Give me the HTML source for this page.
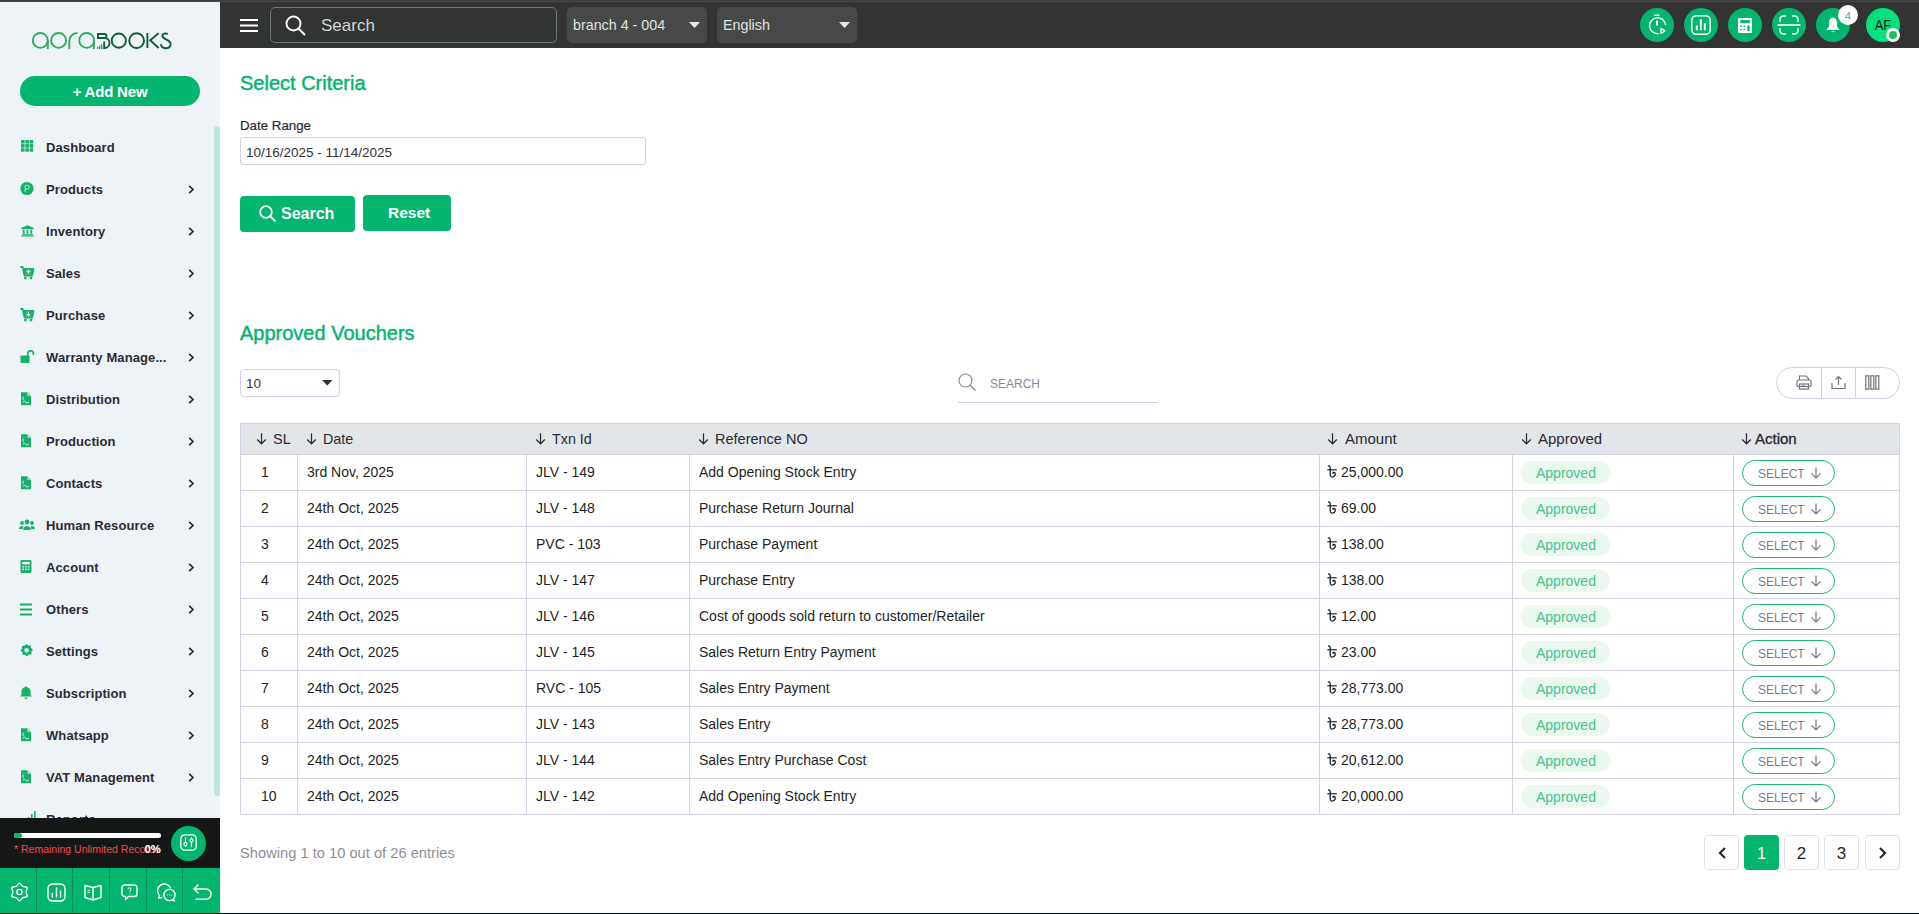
<!DOCTYPE html><html><head><meta charset="utf-8"><style>
*{margin:0;padding:0;box-sizing:border-box}
html,body{width:1919px;height:914px;overflow:hidden;background:#fff;font-family:"Liberation Sans",sans-serif}
.t{position:absolute;white-space:nowrap}
.r{position:absolute}
.s{position:absolute;overflow:visible}
</style></head><body>
<div class="r" style="left:0px;top:0px;width:220px;height:914px;background:#eef3f8;"></div>
<svg class="s" style="left:32px;top:32px;" width="140" height="18" viewBox="0 0 140 18"><g fill="none" stroke-width="1.9" stroke-linecap="butt">
<g stroke="#2bab5f">
<circle cx="8.3" cy="8.4" r="7.45"/><line x1="15.8" y1="8.5" x2="15.8" y2="17"/>
<circle cx="26.6" cy="8.4" r="7.45"/>
<path d="M37.3 17 V9 A7.9 7.9 0 0 1 45.6 1.1"/>
<circle cx="54.7" cy="8.4" r="7.45"/><line x1="61.9" y1="8.5" x2="61.9" y2="17"/>
</g>
<g stroke="#0e5f38">
<path d="M66 2 H72.5 A2 2 0 0 1 74.5 4 V4 A2 2 0 0 1 72.5 6 H66 Z"/>
<path d="M72.5 6 A5 5 0 0 1 72.5 16 H72.2 V9.5"/>
<circle cx="86.8" cy="8.6" r="7.1"/>
<circle cx="104.6" cy="8.6" r="7.4"/>
<line x1="115.4" y1="1" x2="115.4" y2="16"/><path d="M126.6 1.2 L118.2 8.3 L126.6 16"/>
<path d="M135.8 1.8 Q131 0.6 130.4 3.4 Q130 5.4 133.5 7.2 L135.5 8.2 Q139.2 10.2 138.6 13 Q137.8 16.2 133.8 16.2 Q129.8 16.2 128.8 12.2"/>
</g>
<g fill="#2bab5f" stroke="none"><rect x="65" y="14.8" width="1.4" height="2.2"/><rect x="67" y="13.6" width="1.4" height="3.4"/><rect x="69" y="12.2" width="1.4" height="4.8"/></g>
</g></svg>
<div class="r" style="left:20px;top:76px;width:180px;height:30px;border-radius:15px;background:#03b56f"></div>
<div class="t" style="left:110px;top:80.5px;font-size:15px;line-height:21px;color:#fff;font-weight:bold;transform:translateX(-50%);letter-spacing:-0.2px">+ Add New</div>
<div class="r" style="left:214px;top:126px;width:6px;height:670px;background:#bde7db;border-radius:3px"></div>
<svg class="s" style="left:20px;top:140px;" width="16" height="14" viewBox="0 0 16 14"><rect x="1.0" y="0.0" width="3.6" height="3.6" rx="0.5" fill="#17b26a"/><rect x="1.0" y="4.1" width="3.6" height="3.6" rx="0.5" fill="#17b26a"/><rect x="1.0" y="8.2" width="3.6" height="3.6" rx="0.5" fill="#17b26a"/><rect x="5.3" y="0.0" width="3.6" height="3.6" rx="0.5" fill="#17b26a"/><rect x="5.3" y="4.1" width="3.6" height="3.6" rx="0.5" fill="#17b26a"/><rect x="5.3" y="8.2" width="3.6" height="3.6" rx="0.5" fill="#17b26a"/><rect x="9.6" y="0.0" width="3.6" height="3.6" rx="0.5" fill="#17b26a"/><rect x="9.6" y="4.1" width="3.6" height="3.6" rx="0.5" fill="#17b26a"/><rect x="9.6" y="8.2" width="3.6" height="3.6" rx="0.5" fill="#17b26a"/></svg>
<div class="t" style="left:46px;top:139.0px;font-size:13px;line-height:18px;color:#2b2a35;font-weight:bold;letter-spacing:0.1px">Dashboard</div>
<svg class="s" style="left:20px;top:181.5px;" width="16" height="14" viewBox="0 0 16 14"><circle cx="7" cy="6.5" r="6.6" fill="#17b26a"/><path d="M5.2 10.2V3.4h2.2a1.9 1.9 0 0 1 0 3.8H5.2" stroke="#cdeedd" stroke-width="0.9" fill="none"/></svg>
<div class="t" style="left:46px;top:181.0px;font-size:13px;line-height:18px;color:#2b2a35;font-weight:bold;letter-spacing:0.1px">Products</div>
<svg class="s" style="left:188px;top:185px;" width="7" height="9" viewBox="0 0 7 9"><path d="M1.2 0.8 L5 4.5 L1.2 8.2" stroke="#2b2a35" stroke-width="1.7" fill="none"/></svg>
<svg class="s" style="left:20.5px;top:224.5px;" width="16" height="14" viewBox="0 0 16 14"><path d="M6.5 0.3 L12.8 3 V3.9 H0.2 V3Z M1 9.3 H12 V10.3 H1Z M0.2 10.6 H12.8 V11.6 H0.2Z" fill="#17b26a"/><rect x="1.8" y="4.5" width="1.8" height="4.3" fill="#17b26a"/><rect x="5.6" y="4.5" width="1.8" height="4.3" fill="#17b26a"/><rect x="9.4" y="4.5" width="1.8" height="4.3" fill="#17b26a"/></svg>
<div class="t" style="left:46px;top:223.0px;font-size:13px;line-height:18px;color:#2b2a35;font-weight:bold;letter-spacing:0.1px">Inventory</div>
<svg class="s" style="left:188px;top:227px;" width="7" height="9" viewBox="0 0 7 9"><path d="M1.2 0.8 L5 4.5 L1.2 8.2" stroke="#2b2a35" stroke-width="1.7" fill="none"/></svg>
<svg class="s" style="left:20px;top:266px;" width="16" height="14" viewBox="0 0 16 14"><path d="M0.3 1 H2.6 L4.7 9.5 H12 L13.6 3 H4" stroke="#17b26a" stroke-width="1.8" fill="none" stroke-linejoin="round"/><rect x="3.6" y="3" width="9.6" height="5.6" fill="#17b26a"/><circle cx="5.3" cy="12.1" r="1.4" fill="#17b26a"/><circle cx="11" cy="12.1" r="1.4" fill="#17b26a"/><path d="M8.4 3.6V7.8M6.3 5.7H10.5" stroke="#fff" stroke-width="1.2"/></svg>
<div class="t" style="left:46px;top:265.0px;font-size:13px;line-height:18px;color:#2b2a35;font-weight:bold;letter-spacing:0.1px">Sales</div>
<svg class="s" style="left:188px;top:269px;" width="7" height="9" viewBox="0 0 7 9"><path d="M1.2 0.8 L5 4.5 L1.2 8.2" stroke="#2b2a35" stroke-width="1.7" fill="none"/></svg>
<svg class="s" style="left:20px;top:308px;" width="16" height="14" viewBox="0 0 16 14"><path d="M0.3 1 H2.6 L4.7 9.5 H12 L13.6 3 H4" stroke="#17b26a" stroke-width="1.8" fill="none" stroke-linejoin="round"/><rect x="3.6" y="3" width="9.6" height="5.6" fill="#17b26a"/><circle cx="5.3" cy="12.1" r="1.4" fill="#17b26a"/><circle cx="11" cy="12.1" r="1.4" fill="#17b26a"/><path d="M8.4 3.4V7.6M6.6 5.9L8.4 7.7L10.2 5.9" stroke="#fff" stroke-width="1.1" fill="none"/></svg>
<div class="t" style="left:46px;top:307.0px;font-size:13px;line-height:18px;color:#2b2a35;font-weight:bold;letter-spacing:0.1px">Purchase</div>
<svg class="s" style="left:188px;top:311px;" width="7" height="9" viewBox="0 0 7 9"><path d="M1.2 0.8 L5 4.5 L1.2 8.2" stroke="#2b2a35" stroke-width="1.7" fill="none"/></svg>
<svg class="s" style="left:20px;top:350px;" width="16" height="14" viewBox="0 0 16 14"><rect x="0.5" y="5.5" width="9" height="7.5" rx="0.8" fill="#17b26a"/><path d="M7.8 5.8V3.6a2.8 2.8 0 0 1 5.6 0V5" stroke="#17b26a" stroke-width="1.7" fill="none"/></svg>
<div class="t" style="left:46px;top:349.0px;font-size:13px;line-height:18px;color:#2b2a35;font-weight:bold;letter-spacing:0.1px">Warranty Manage...</div>
<svg class="s" style="left:188px;top:353px;" width="7" height="9" viewBox="0 0 7 9"><path d="M1.2 0.8 L5 4.5 L1.2 8.2" stroke="#2b2a35" stroke-width="1.7" fill="none"/></svg>
<svg class="s" style="left:20px;top:392px;" width="16" height="14" viewBox="0 0 16 14"><path d="M1 0.3 H7.3 L11 4 V13.3 H1Z" fill="#17b26a"/><path d="M7.3 0.3V4H11" fill="#9ad9b8"/><path d="M3 10.5 Q4.5 7.5 5.5 10 T9 10" stroke="#fff" stroke-width="0.8" fill="none"/><path d="M3 4.5 V8" stroke="#fff" stroke-width="0.8"/></svg>
<div class="t" style="left:46px;top:391.0px;font-size:13px;line-height:18px;color:#2b2a35;font-weight:bold;letter-spacing:0.1px">Distribution</div>
<svg class="s" style="left:188px;top:395px;" width="7" height="9" viewBox="0 0 7 9"><path d="M1.2 0.8 L5 4.5 L1.2 8.2" stroke="#2b2a35" stroke-width="1.7" fill="none"/></svg>
<svg class="s" style="left:20px;top:434px;" width="16" height="14" viewBox="0 0 16 14"><path d="M1 0.3 H7.3 L11 4 V13.3 H1Z" fill="#17b26a"/><path d="M7.3 0.3V4H11" fill="#9ad9b8"/><path d="M3 10.5 Q4.5 7.5 5.5 10 T9 10" stroke="#fff" stroke-width="0.8" fill="none"/><path d="M3 4.5 V8" stroke="#fff" stroke-width="0.8"/></svg>
<div class="t" style="left:46px;top:433.0px;font-size:13px;line-height:18px;color:#2b2a35;font-weight:bold;letter-spacing:0.1px">Production</div>
<svg class="s" style="left:188px;top:437px;" width="7" height="9" viewBox="0 0 7 9"><path d="M1.2 0.8 L5 4.5 L1.2 8.2" stroke="#2b2a35" stroke-width="1.7" fill="none"/></svg>
<svg class="s" style="left:20px;top:476px;" width="16" height="14" viewBox="0 0 16 14"><path d="M1 0.3 H7.3 L11 4 V13.3 H1Z" fill="#17b26a"/><path d="M7.3 0.3V4H11" fill="#9ad9b8"/><path d="M3 10.5 Q4.5 7.5 5.5 10 T9 10" stroke="#fff" stroke-width="0.8" fill="none"/><path d="M3 4.5 V8" stroke="#fff" stroke-width="0.8"/></svg>
<div class="t" style="left:46px;top:475.0px;font-size:13px;line-height:18px;color:#2b2a35;font-weight:bold;letter-spacing:0.1px">Contacts</div>
<svg class="s" style="left:188px;top:479px;" width="7" height="9" viewBox="0 0 7 9"><path d="M1.2 0.8 L5 4.5 L1.2 8.2" stroke="#2b2a35" stroke-width="1.7" fill="none"/></svg>
<svg class="s" style="left:19px;top:519px;" width="16" height="14" viewBox="0 0 16 14"><circle cx="8" cy="3" r="2.4" fill="#17b26a"/><circle cx="3" cy="4" r="1.9" fill="#17b26a"/><circle cx="13" cy="4" r="1.9" fill="#17b26a"/><path d="M4.3 11 a3.7 3.7 0 0 1 7.4 0Z" fill="#17b26a"/><path d="M0 10 a3 2.6 0 0 1 4.5 -2.6 L3.8 10Z M16 10 a3 2.6 0 0 0 -4.5 -2.6 L12.2 10Z" fill="#17b26a"/></svg>
<div class="t" style="left:46px;top:517.0px;font-size:13px;line-height:18px;color:#2b2a35;font-weight:bold;letter-spacing:0.1px">Human Resource</div>
<svg class="s" style="left:188px;top:521px;" width="7" height="9" viewBox="0 0 7 9"><path d="M1.2 0.8 L5 4.5 L1.2 8.2" stroke="#2b2a35" stroke-width="1.7" fill="none"/></svg>
<svg class="s" style="left:20px;top:560px;" width="16" height="14" viewBox="0 0 16 14"><rect x="0.5" y="0" width="11" height="13" rx="1.2" fill="#17b26a"/><rect x="2.3" y="1.8" width="7.4" height="2.6" fill="#eef3f8"/><rect x="2.3" y="6.0" width="1.6" height="1.5" fill="#eef3f8"/><rect x="2.3" y="8.6" width="1.6" height="1.5" fill="#eef3f8"/><rect x="5.0" y="6.0" width="1.6" height="1.5" fill="#eef3f8"/><rect x="5.0" y="8.6" width="1.6" height="1.5" fill="#eef3f8"/><rect x="7.7" y="6.0" width="1.6" height="1.5" fill="#eef3f8"/><rect x="7.7" y="8.6" width="1.6" height="1.5" fill="#eef3f8"/></svg>
<div class="t" style="left:46px;top:559.0px;font-size:13px;line-height:18px;color:#2b2a35;font-weight:bold;letter-spacing:0.1px">Account</div>
<svg class="s" style="left:188px;top:563px;" width="7" height="9" viewBox="0 0 7 9"><path d="M1.2 0.8 L5 4.5 L1.2 8.2" stroke="#2b2a35" stroke-width="1.7" fill="none"/></svg>
<svg class="s" style="left:20px;top:603px;" width="16" height="14" viewBox="0 0 16 14"><path d="M0 1.5H12M0 6.5H12M0 11.5H12" stroke="#17b26a" stroke-width="1.9"/></svg>
<div class="t" style="left:46px;top:601.0px;font-size:13px;line-height:18px;color:#2b2a35;font-weight:bold;letter-spacing:0.1px">Others</div>
<svg class="s" style="left:188px;top:605px;" width="7" height="9" viewBox="0 0 7 9"><path d="M1.2 0.8 L5 4.5 L1.2 8.2" stroke="#2b2a35" stroke-width="1.7" fill="none"/></svg>
<svg class="s" style="left:20px;top:644px;" width="16" height="14" viewBox="0 0 16 14"><path d="M6.5 0 L8.2 1.6 L10.8 1.4 L11 4 L13 5.7 L11.4 7.6 L11.5 10.3 L8.9 10.5 L7 12.6 L5.1 10.8 L2.5 10.8 L2.4 8.2 L0.3 6.6 L2 4.6 L1.9 2 L4.5 1.8Z" fill="#17b26a"/><circle cx="6.6" cy="6.3" r="2.2" fill="#eef3f8"/></svg>
<div class="t" style="left:46px;top:643.0px;font-size:13px;line-height:18px;color:#2b2a35;font-weight:bold;letter-spacing:0.1px">Settings</div>
<svg class="s" style="left:188px;top:647px;" width="7" height="9" viewBox="0 0 7 9"><path d="M1.2 0.8 L5 4.5 L1.2 8.2" stroke="#2b2a35" stroke-width="1.7" fill="none"/></svg>
<svg class="s" style="left:20px;top:686px;" width="16" height="14" viewBox="0 0 16 14"><path d="M6 0.3 a1 1 0 0 1 1 1 a4.3 4.3 0 0 1 3.6 4.3 V9 L12 10.6 H0 L1.4 9 V5.6 A4.3 4.3 0 0 1 5 1.3 a1 1 0 0 1 1 -1Z" fill="#17b26a"/><path d="M4.5 11.4 a1.5 1.5 0 0 0 3 0Z" fill="#17b26a"/></svg>
<div class="t" style="left:46px;top:685.0px;font-size:13px;line-height:18px;color:#2b2a35;font-weight:bold;letter-spacing:0.1px">Subscription</div>
<svg class="s" style="left:188px;top:689px;" width="7" height="9" viewBox="0 0 7 9"><path d="M1.2 0.8 L5 4.5 L1.2 8.2" stroke="#2b2a35" stroke-width="1.7" fill="none"/></svg>
<svg class="s" style="left:20px;top:728px;" width="16" height="14" viewBox="0 0 16 14"><path d="M1 0.3 H7.3 L11 4 V13.3 H1Z" fill="#17b26a"/><path d="M7.3 0.3V4H11" fill="#9ad9b8"/><path d="M3 10.5 Q4.5 7.5 5.5 10 T9 10" stroke="#fff" stroke-width="0.8" fill="none"/><path d="M3 4.5 V8" stroke="#fff" stroke-width="0.8"/></svg>
<div class="t" style="left:46px;top:727.0px;font-size:13px;line-height:18px;color:#2b2a35;font-weight:bold;letter-spacing:0.1px">Whatsapp</div>
<svg class="s" style="left:188px;top:731px;" width="7" height="9" viewBox="0 0 7 9"><path d="M1.2 0.8 L5 4.5 L1.2 8.2" stroke="#2b2a35" stroke-width="1.7" fill="none"/></svg>
<svg class="s" style="left:20px;top:770px;" width="16" height="14" viewBox="0 0 16 14"><path d="M1 0.3 H7.3 L11 4 V13.3 H1Z" fill="#17b26a"/><path d="M7.3 0.3V4H11" fill="#9ad9b8"/><path d="M3 10.5 Q4.5 7.5 5.5 10 T9 10" stroke="#fff" stroke-width="0.8" fill="none"/><path d="M3 4.5 V8" stroke="#fff" stroke-width="0.8"/></svg>
<div class="t" style="left:46px;top:769.0px;font-size:13px;line-height:18px;color:#2b2a35;font-weight:bold;letter-spacing:0.1px">VAT Management</div>
<svg class="s" style="left:188px;top:773px;" width="7" height="9" viewBox="0 0 7 9"><path d="M1.2 0.8 L5 4.5 L1.2 8.2" stroke="#2b2a35" stroke-width="1.7" fill="none"/></svg>
<svg class="s" style="left:27.5px;top:811px;" width="16" height="14" viewBox="0 0 16 14"><rect x="0" y="6" width="1.6" height="5" fill="#17b26a"/><rect x="3" y="3" width="1.6" height="8" fill="#17b26a"/><rect x="6" y="0" width="1.6" height="11" fill="#17b26a"/></svg>
<div class="t" style="left:46px;top:811.0px;font-size:13px;line-height:18px;color:#2b2a35;font-weight:bold;letter-spacing:0.1px">Reports</div>
<div class="r" style="left:0px;top:818px;width:220px;height:50px;background:#151716;"></div>
<div class="r" style="left:14px;top:833px;width:147px;height:5px;background:#fff;border-radius:3px"></div>
<div class="r" style="left:14px;top:833px;width:8px;height:5px;background:#03b56f;border-radius:3px"></div>
<div class="t" style="left:14px;top:842.0px;font-size:10.5px;line-height:14px;color:#ef4d4d;font-weight:normal;">* Remaining Unlimited Records</div>
<div class="t" style="left:144.5px;top:841.5px;font-size:11.3px;line-height:14px;color:#fff;font-weight:bold;">0%</div>
<div class="r" style="left:171px;top:826px;width:35px;height:35px;border-radius:50%;background:#03b56f"></div>
<svg class="s" style="left:180px;top:834px;" width="17" height="17" viewBox="0 0 17 17"><rect x="0.8" y="0.8" width="15.4" height="15.4" rx="4" stroke="#fff" stroke-width="1.3" fill="none"/><path d="M5.5 3.5V13M11.5 3.5V13" stroke="#fff" stroke-width="1.2"/><circle cx="5.5" cy="10" r="1.6" fill="#03b56f" stroke="#fff" stroke-width="1.1"/><circle cx="11.5" cy="6.5" r="1.6" fill="#03b56f" stroke="#fff" stroke-width="1.1"/></svg>
<div class="r" style="left:0px;top:868px;width:220px;height:45px;background:#03b56f;"></div>
<div class="r" style="left:36px;top:868px;width:1px;height:45px;background:#0b8a57;"></div>
<div class="r" style="left:72px;top:868px;width:1px;height:45px;background:#0b8a57;"></div>
<div class="r" style="left:109px;top:868px;width:1px;height:45px;background:#0b8a57;"></div>
<div class="r" style="left:146px;top:868px;width:1px;height:45px;background:#0b8a57;"></div>
<div class="r" style="left:182px;top:868px;width:1px;height:45px;background:#0b8a57;"></div>
<svg class="s" style="left:10px;top:882px;" width="19" height="20" viewBox="0 0 19 20"><path d="M9.50 1.10 C10.60 1.10 11.52 3.54 12.80 4.28 C14.08 5.03 16.66 4.60 17.21 5.55 C17.76 6.50 16.10 8.52 16.10 10.00 C16.10 11.48 17.76 13.50 17.21 14.45 C16.66 15.40 14.08 14.97 12.80 15.72 C11.52 16.46 10.60 18.90 9.50 18.90 C8.40 18.90 7.48 16.46 6.20 15.72 C4.92 14.97 2.34 15.40 1.79 14.45 C1.24 13.50 2.90 11.48 2.90 10.00 C2.90 8.52 1.24 6.50 1.79 5.55 C2.34 4.60 4.92 5.03 6.20 4.28 C7.48 3.54 8.40 1.10 9.50 1.10Z" stroke="#fff" stroke-width="1.4" fill="none" stroke-linecap="round" stroke-linejoin="round"/><circle cx="9.5" cy="10" r="2.6" stroke="#fff" stroke-width="1.4" fill="none" stroke-linecap="round" stroke-linejoin="round"/></svg>
<svg class="s" style="left:47px;top:883px;" width="19" height="19" viewBox="0 0 19 19"><rect x="1" y="1" width="17" height="17" rx="4.5" stroke="#fff" stroke-width="1.4" fill="none" stroke-linecap="round" stroke-linejoin="round"/><path d="M5.3 14V10.5M9.5 14V5M13.5 14V8" stroke="#fff" stroke-width="1.4" fill="none" stroke-linecap="round" stroke-linejoin="round"/></svg>
<svg class="s" style="left:84px;top:884px;" width="18" height="17" viewBox="0 0 18 17"><path d="M9 3.5 L1 1.5 V13.5 L9 16 L17 13.5 V1.5Z M9 3.5V16" stroke="#fff" stroke-width="1.4" fill="none" stroke-linecap="round" stroke-linejoin="round"/><path d="M3.5 6.3H5.8M3.5 8.3H5.8" stroke="#fff" stroke-width="0.9"/></svg>
<svg class="s" style="left:121px;top:884px;" width="17" height="17" viewBox="0 0 17 17"><path d="M3.5 1 H13.5 A2.5 2.5 0 0 1 16 3.5 V10 A2.5 2.5 0 0 1 13.5 12.5 H7.5 L4.5 15.5 V12.5 H3.5 A2.5 2.5 0 0 1 1 10 V3.5 A2.5 2.5 0 0 1 3.5 1Z" stroke="#fff" stroke-width="1.4" fill="none" stroke-linecap="round" stroke-linejoin="round"/><path d="M7 5.2 a1.5 1.5 0 1 1 2 1.4 V8" stroke="#fff" stroke-width="1" fill="none"/><circle cx="9" cy="9.8" r="0.5" fill="#fff"/></svg>
<svg class="s" style="left:157px;top:883px;" width="20" height="19" viewBox="0 0 20 19"><path d="M13.5 4.8 A6.8 6.8 0 1 0 2.5 12.5 L1.5 15 L4.8 14.5" stroke="#fff" stroke-width="1.4" fill="none" stroke-linecap="round" stroke-linejoin="round"/><circle cx="12.5" cy="12" r="5.6" stroke="#fff" stroke-width="1.4" fill="none" stroke-linecap="round" stroke-linejoin="round"/><path d="M15.5 17 L17.5 18" stroke="#fff" stroke-width="1.4" fill="none" stroke-linecap="round" stroke-linejoin="round"/><circle cx="10.3" cy="12" r="0.6" fill="#fff"/><circle cx="12.5" cy="12" r="0.6" fill="#fff"/><circle cx="14.7" cy="12" r="0.6" fill="#fff"/></svg>
<svg class="s" style="left:193px;top:884px;" width="19" height="18" viewBox="0 0 19 18"><path d="M5 1 L1 5 L5 9 M1 5 H13 A4.8 4.8 0 0 1 13 15.2 H3" stroke="#fff" stroke-width="1.4" fill="none" stroke-linecap="round" stroke-linejoin="round"/></svg>
<div class="r" style="left:0px;top:0px;width:1919px;height:1px;background:#3c3c3c;"></div>
<div class="r" style="left:0px;top:1px;width:1919px;height:1px;background:#484948;"></div>
<div class="r" style="left:0px;top:913px;width:1919px;height:1px;background:#02141a;"></div>
<div class="r" style="left:220px;top:2px;width:1699px;height:46px;background:#313433;"></div>
<svg class="s" style="left:240px;top:18px;" width="18" height="15" viewBox="0 0 18 15"><path d="M0 2H18M0 7.5H18M0 13H18" stroke="#fff" stroke-width="2.2"/></svg>
<div class="r" style="left:270px;top:7px;width:287px;height:36px;border:1px solid #6d7773;border-radius:5px"></div>
<svg class="s" style="left:285px;top:15px;" width="21" height="21" viewBox="0 0 21 21"><circle cx="8.5" cy="8.5" r="7" stroke="#fff" stroke-width="1.9" fill="none"/><path d="M13.5 13.5L19.5 19.5" stroke="#fff" stroke-width="1.9" stroke-linecap="round"/></svg>
<div class="t" style="left:321px;top:13.5px;font-size:17px;line-height:23px;color:#d2d5d4;font-weight:normal;">Search</div>
<div class="r" style="left:567px;top:7px;width:140px;height:36px;background:#464948;border-radius:5px"></div>
<div class="t" style="left:573px;top:15.0px;font-size:14.3px;line-height:20px;color:#e0e2e1;font-weight:normal;">branch 4 - 004</div>
<svg class="s" style="left:689px;top:22px;" width="12" height="7" viewBox="0 0 12 7"><path d="M0 0H11L5.5 6Z" fill="#e6e7e7"/></svg>
<div class="r" style="left:717px;top:7px;width:140px;height:36px;background:#464948;border-radius:5px"></div>
<div class="t" style="left:723px;top:15.0px;font-size:14.3px;line-height:20px;color:#e0e2e1;font-weight:normal;">English</div>
<svg class="s" style="left:839px;top:22px;" width="12" height="7" viewBox="0 0 12 7"><path d="M0 0H11L5.5 6Z" fill="#e6e7e7"/></svg>
<div class="r" style="left:1640px;top:8px;width:34px;height:34px;border-radius:50%;background:#03b56f"></div>
<div class="r" style="left:1684px;top:8px;width:34px;height:34px;border-radius:50%;background:#03b56f"></div>
<div class="r" style="left:1728px;top:8px;width:34px;height:34px;border-radius:50%;background:#03b56f"></div>
<div class="r" style="left:1772px;top:8px;width:34px;height:34px;border-radius:50%;background:#03b56f"></div>
<div class="r" style="left:1816px;top:8px;width:34px;height:34px;border-radius:50%;background:#03b56f"></div>
<svg class="s" style="left:1647px;top:14px;" width="22" height="22" viewBox="0 0 22 22"><path d="M7.5 1.3H12" stroke="#fff" stroke-width="1.4" fill="none" stroke-linecap="round" stroke-linejoin="round"/><path d="M10 6.5 V11.5" stroke="#fff" stroke-width="1.9"/><path d="M18.5 10.5 A8 8 0 1 0 11 19.8" stroke="#fff" stroke-width="1.4" fill="none" stroke-linecap="round" stroke-linejoin="round"/><path d="M14 14.3 L18 16.8 L14 19.3Z" stroke="#fff" stroke-width="1.4" fill="none" stroke-linecap="round" stroke-linejoin="round"/></svg>
<svg class="s" style="left:1691px;top:15px;" width="20" height="20" viewBox="0 0 20 20"><rect x="0.8" y="0.8" width="18.4" height="18.4" rx="4.5" stroke="#fff" stroke-width="1.4" fill="none" stroke-linecap="round" stroke-linejoin="round"/><path d="M5.8 15.3V10.5M9.8 15.3V4.3M13.8 15.3V8.3" stroke="#fff" stroke-width="1.9"/></svg>
<svg class="s" style="left:1738px;top:18px;" width="14" height="15" viewBox="0 0 14 15"><rect x="0" y="0" width="14" height="15" rx="0.8" fill="#fff"/><rect x="2.3" y="2" width="9.5" height="3.2" fill="#03b56f"/><rect x="2.2" y="7.5" width="1.4" height="1.4" fill="#03b56f"/><rect x="2.2" y="10.8" width="1.4" height="1.4" fill="#03b56f"/><rect x="5.5" y="7.5" width="1.4" height="1.4" fill="#03b56f"/><rect x="5.5" y="10.8" width="1.4" height="1.4" fill="#03b56f"/><rect x="9.3" y="7.5" width="2.4" height="5.7" fill="#03b56f"/></svg>
<svg class="s" style="left:1777px;top:15px;" width="24" height="20" viewBox="0 0 24 20"><path d="M3 6.5V4.5A3.5 3.5 0 0 1 6.5 1H8.5M15.5 1H17.5A3.5 3.5 0 0 1 21 4.5V6.5M21 13.5V15.5A3.5 3.5 0 0 1 17.5 19H15.5M8.5 19H6.5A3.5 3.5 0 0 1 3 15.5V13.5" stroke="#fff" stroke-width="1.4" fill="none" stroke-linecap="round" stroke-linejoin="round"/><path d="M0.5 10H23.5" stroke="#fff" stroke-width="1.6"/></svg>
<svg class="s" style="left:1826px;top:17px;" width="14" height="17" viewBox="0 0 14 17"><path d="M7 0.8 C4 0.8 3 3.5 3 6 V9.5 L0.3 13 H13.7 L11 9.5 V6 C11 3.5 10 0.8 7 0.8Z" fill="#fff"/><path d="M5.3 14.3 A1.8 1.6 0 0 0 8.7 14.3Z" fill="#fff"/></svg>
<div class="r" style="left:1838px;top:5px;width:20px;height:20px;border-radius:50%;background:#fff"></div>
<div class="t" style="left:1848px;top:8.6px;font-size:10.5px;line-height:14px;color:#3aa2c2;font-weight:normal;transform:translateX(-50%)">4</div>
<div class="r" style="left:1866px;top:8px;width:34px;height:34px;border-radius:50%;background:#00e27a"></div>
<div class="t" style="left:1883px;top:14.1px;font-size:15px;line-height:21px;color:#111;font-weight:normal;transform:translateX(-50%) scaleX(0.86)">AF</div>
<div class="r" style="left:1886px;top:28px;width:14px;height:14px;border-radius:50%;background:#1ec25c;border:3px solid #fff"></div>
<div class="t" style="left:240px;top:70.0px;font-size:20px;line-height:26px;color:#03b56f;font-weight:normal;-webkit-text-stroke:0.45px #03b56f">Select Criteria</div>
<div class="t" style="left:240px;top:117.0px;font-size:13.3px;line-height:18px;color:#2b2a35;font-weight:normal;-webkit-text-stroke:0.2px #2b2a35">Date Range</div>
<div class="r" style="left:240px;top:137px;width:406px;height:28px;border:1px solid #d3d1e3;border-radius:3px"></div>
<div class="t" style="left:246px;top:143.5px;font-size:13.5px;line-height:18px;color:#333;font-weight:normal;">10/16/2025 - 11/14/2025</div>
<div class="r" style="left:240px;top:196px;width:115px;height:36px;border-radius:4px;background:#03b56f"></div>
<svg class="s" style="left:259px;top:205px;" width="17" height="17" viewBox="0 0 17 17"><circle cx="7" cy="7" r="5.8" stroke="#fff" stroke-width="1.8" fill="none"/><path d="M11.2 11.2L16 16" stroke="#fff" stroke-width="1.8" stroke-linecap="round"/></svg>
<div class="t" style="left:281px;top:204.0px;font-size:16px;line-height:20px;color:#fff;font-weight:bold;">Search</div>
<div class="r" style="left:363px;top:195px;width:88px;height:36px;border-radius:4px;background:#03b56f"></div>
<div class="t" style="left:388px;top:203.0px;font-size:15.5px;line-height:20px;color:#fff;font-weight:bold;">Reset</div>
<div class="t" style="left:240px;top:320.0px;font-size:20px;line-height:26px;color:#03b56f;font-weight:normal;-webkit-text-stroke:0.45px #03b56f">Approved Vouchers</div>
<div class="r" style="left:240px;top:369px;width:100px;height:28px;border:1px solid #d3d1e3;border-radius:4px"></div>
<div class="t" style="left:246px;top:374.5px;font-size:13.5px;line-height:18px;color:#333;font-weight:normal;">10</div>
<svg class="s" style="left:322px;top:380px;" width="11" height="6" viewBox="0 0 11 6"><path d="M0 0H10.5L5.25 5.5Z" fill="#2f3534"/></svg>
<svg class="s" style="left:958px;top:373px;" width="19" height="19" viewBox="0 0 19 19"><circle cx="7.5" cy="7.5" r="6.5" stroke="#8b8e98" stroke-width="1.2" fill="none"/><path d="M12.2 12.2L17.5 17.5" stroke="#8b8e98" stroke-width="1.3"/></svg>
<div class="t" style="left:990px;top:375.5px;font-size:12px;line-height:16px;color:#878b96;font-weight:normal;">SEARCH</div>
<div class="r" style="left:958px;top:402px;width:200px;height:1px;background:#d3d1e3;"></div>
<div class="r" style="left:1776px;top:367px;width:124px;height:32px;border:1px solid #d3d1e3;border-radius:16px"></div>
<div class="r" style="left:1821px;top:368px;width:1px;height:30px;background:#d3d1e3;"></div>
<div class="r" style="left:1855px;top:368px;width:1px;height:30px;background:#d3d1e3;"></div>
<svg class="s" style="left:1796px;top:375px;" width="16" height="15" viewBox="0 0 16 15"><path d="M3.5 5V1H10L12.5 3.5V5" stroke="#6f7480" stroke-width="1.2" fill="none"/><rect x="1" y="5" width="14" height="6.5" rx="1.5" stroke="#6f7480" stroke-width="1.2" fill="none"/><rect x="3.5" y="9" width="9" height="5" stroke="#6f7480" stroke-width="1.2" fill="none"/><path d="M5.5 11H9" stroke="#6f7480" stroke-width="1.2" fill="none"/></svg>
<svg class="s" style="left:1831px;top:375px;" width="15" height="15" viewBox="0 0 15 15"><path d="M7.5 10V1.5M4.5 4.5L7.5 1.5L10.5 4.5M1 8V13.5H14V8" stroke="#6f7480" stroke-width="1.2" fill="none"/></svg>
<svg class="s" style="left:1865px;top:375px;" width="15" height="15" viewBox="0 0 15 15"><rect x="0.8" y="0.8" width="3" height="13.4" stroke="#6f7480" stroke-width="1.2" fill="none"/><rect x="5.8" y="0.8" width="3" height="13.4" stroke="#6f7480" stroke-width="1.2" fill="none"/><rect x="10.8" y="0.8" width="3" height="13.4" stroke="#6f7480" stroke-width="1.2" fill="none"/></svg>
<div class="r" style="left:240px;top:423px;width:1660px;height:32px;background:#e2e6e9;"></div>
<div class="r" style="left:240px;top:423px;width:1660px;height:1px;background:#d3d1e3;"></div>
<div class="r" style="left:240px;top:454px;width:1660px;height:1px;background:#d3d1e3;"></div>
<div class="r" style="left:240px;top:490px;width:1660px;height:1px;background:#d3d1e3;"></div>
<div class="r" style="left:240px;top:526px;width:1660px;height:1px;background:#d3d1e3;"></div>
<div class="r" style="left:240px;top:562px;width:1660px;height:1px;background:#d3d1e3;"></div>
<div class="r" style="left:240px;top:598px;width:1660px;height:1px;background:#d3d1e3;"></div>
<div class="r" style="left:240px;top:634px;width:1660px;height:1px;background:#d3d1e3;"></div>
<div class="r" style="left:240px;top:670px;width:1660px;height:1px;background:#d3d1e3;"></div>
<div class="r" style="left:240px;top:706px;width:1660px;height:1px;background:#d3d1e3;"></div>
<div class="r" style="left:240px;top:742px;width:1660px;height:1px;background:#d3d1e3;"></div>
<div class="r" style="left:240px;top:778px;width:1660px;height:1px;background:#d3d1e3;"></div>
<div class="r" style="left:240px;top:814px;width:1660px;height:1px;background:#d3d1e3;"></div>
<div class="r" style="left:297px;top:454px;width:1px;height:361px;background:#d3d1e3;"></div>
<div class="r" style="left:526px;top:454px;width:1px;height:361px;background:#d3d1e3;"></div>
<div class="r" style="left:689px;top:454px;width:1px;height:361px;background:#d3d1e3;"></div>
<div class="r" style="left:1319px;top:454px;width:1px;height:361px;background:#d3d1e3;"></div>
<div class="r" style="left:1512px;top:454px;width:1px;height:361px;background:#d3d1e3;"></div>
<div class="r" style="left:1733px;top:454px;width:1px;height:361px;background:#d3d1e3;"></div>
<div class="r" style="left:240px;top:423px;width:1px;height:392px;background:#d3d1e3;"></div>
<div class="r" style="left:1899px;top:423px;width:1px;height:392px;background:#d3d1e3;"></div>
<svg class="s" style="left:256px;top:433px;" width="11" height="12" viewBox="0 0 11 12"><path d="M5.5 0.3V10.8M1.2 6.5L5.5 10.8L9.8 6.5" stroke="#2b2a35" stroke-width="1.25" fill="none"/></svg>
<div class="t" style="left:273px;top:429.0px;font-size:14.5px;line-height:20px;color:#2b2a35;font-weight:normal;">SL</div>
<svg class="s" style="left:306px;top:433px;" width="11" height="12" viewBox="0 0 11 12"><path d="M5.5 0.3V10.8M1.2 6.5L5.5 10.8L9.8 6.5" stroke="#2b2a35" stroke-width="1.25" fill="none"/></svg>
<div class="t" style="left:323px;top:429.0px;font-size:14.3px;line-height:20px;color:#2b2a35;font-weight:normal;">Date</div>
<svg class="s" style="left:535px;top:433px;" width="11" height="12" viewBox="0 0 11 12"><path d="M5.5 0.3V10.8M1.2 6.5L5.5 10.8L9.8 6.5" stroke="#2b2a35" stroke-width="1.25" fill="none"/></svg>
<div class="t" style="left:552px;top:429.0px;font-size:14.3px;line-height:20px;color:#2b2a35;font-weight:normal;">Txn Id</div>
<svg class="s" style="left:698px;top:433px;" width="11" height="12" viewBox="0 0 11 12"><path d="M5.5 0.3V10.8M1.2 6.5L5.5 10.8L9.8 6.5" stroke="#2b2a35" stroke-width="1.25" fill="none"/></svg>
<div class="t" style="left:715px;top:429.0px;font-size:14.5px;line-height:20px;color:#2b2a35;font-weight:normal;">Reference NO</div>
<svg class="s" style="left:1327px;top:433px;" width="11" height="12" viewBox="0 0 11 12"><path d="M5.5 0.3V10.8M1.2 6.5L5.5 10.8L9.8 6.5" stroke="#2b2a35" stroke-width="1.25" fill="none"/></svg>
<div class="t" style="left:1345px;top:429.0px;font-size:15px;line-height:20px;color:#2b2a35;font-weight:normal;">Amount</div>
<svg class="s" style="left:1521px;top:433px;" width="11" height="12" viewBox="0 0 11 12"><path d="M5.5 0.3V10.8M1.2 6.5L5.5 10.8L9.8 6.5" stroke="#2b2a35" stroke-width="1.25" fill="none"/></svg>
<div class="t" style="left:1538px;top:429.0px;font-size:15px;line-height:20px;color:#2b2a35;font-weight:normal;">Approved</div>
<svg class="s" style="left:1741px;top:433px;" width="11" height="12" viewBox="0 0 11 12"><path d="M5.5 0.3V10.8M1.2 6.5L5.5 10.8L9.8 6.5" stroke="#2b2a35" stroke-width="1.25" fill="none"/></svg>
<div class="t" style="left:1755px;top:429.0px;font-size:15px;line-height:20px;color:#2b2a35;font-weight:normal;-webkit-text-stroke:0.35px #2b2a35">Action</div>
<div class="t" style="left:261px;top:463.0px;font-size:14px;line-height:18px;color:#1f1f24;font-weight:normal;">1</div>
<div class="t" style="left:307px;top:463.0px;font-size:14px;line-height:18px;color:#1f1f24;font-weight:normal;">3rd Nov, 2025</div>
<div class="t" style="left:536px;top:463.0px;font-size:14px;line-height:18px;color:#1f1f24;font-weight:normal;">JLV - 149</div>
<div class="t" style="left:699px;top:463.0px;font-size:14px;line-height:18px;color:#1f1f24;font-weight:normal;">Add Opening Stock Entry</div>
<svg class="s" style="left:1327px;top:465px;" width="10" height="13" viewBox="0 0 10 13"><path d="M1 1.3 Q2.6 0 3.2 2.5 V9.8 Q3.4 12.3 5.7 12 Q8.4 11.5 8.3 8.8 Q8 7 6.3 7.3" stroke="#111" stroke-width="1.2" fill="none"/><path d="M0.3 4.8H9.8" stroke="#111" stroke-width="1.1"/><circle cx="6.2" cy="7.9" r="0.9" fill="#111"/></svg>
<div class="t" style="left:1341px;top:463.0px;font-size:14px;line-height:18px;color:#1f1f24;font-weight:normal;">25,000.00</div>
<div class="r" style="left:1521px;top:461px;width:89px;height:23px;border-radius:11.5px;background:#eaf8f0"></div>
<div class="t" style="left:1536px;top:463.5px;font-size:14px;line-height:18px;color:#45c48c;font-weight:normal;">Approved</div>
<div class="r" style="left:1742px;top:460px;width:93px;height:26px;border-radius:13px;border:1.3px solid #1fb774"></div>
<div class="t" style="left:1758px;top:466.0px;font-size:12px;line-height:16px;color:#7a7d8a;font-weight:normal;">SELECT</div>
<svg class="s" style="left:1810px;top:467px;" width="12" height="12" viewBox="0 0 12 12"><path d="M6 0.5V11M1.5 6.5L6 11L10.5 6.5" stroke="#7a7d8a" stroke-width="1.2" fill="none"/></svg>
<div class="t" style="left:261px;top:499.0px;font-size:14px;line-height:18px;color:#1f1f24;font-weight:normal;">2</div>
<div class="t" style="left:307px;top:499.0px;font-size:14px;line-height:18px;color:#1f1f24;font-weight:normal;">24th Oct, 2025</div>
<div class="t" style="left:536px;top:499.0px;font-size:14px;line-height:18px;color:#1f1f24;font-weight:normal;">JLV - 148</div>
<div class="t" style="left:699px;top:499.0px;font-size:14px;line-height:18px;color:#1f1f24;font-weight:normal;">Purchase Return Journal</div>
<svg class="s" style="left:1327px;top:501px;" width="10" height="13" viewBox="0 0 10 13"><path d="M1 1.3 Q2.6 0 3.2 2.5 V9.8 Q3.4 12.3 5.7 12 Q8.4 11.5 8.3 8.8 Q8 7 6.3 7.3" stroke="#111" stroke-width="1.2" fill="none"/><path d="M0.3 4.8H9.8" stroke="#111" stroke-width="1.1"/><circle cx="6.2" cy="7.9" r="0.9" fill="#111"/></svg>
<div class="t" style="left:1341px;top:499.0px;font-size:14px;line-height:18px;color:#1f1f24;font-weight:normal;">69.00</div>
<div class="r" style="left:1521px;top:497px;width:89px;height:23px;border-radius:11.5px;background:#eaf8f0"></div>
<div class="t" style="left:1536px;top:499.5px;font-size:14px;line-height:18px;color:#45c48c;font-weight:normal;">Approved</div>
<div class="r" style="left:1742px;top:496px;width:93px;height:26px;border-radius:13px;border:1.3px solid #1fb774"></div>
<div class="t" style="left:1758px;top:502.0px;font-size:12px;line-height:16px;color:#7a7d8a;font-weight:normal;">SELECT</div>
<svg class="s" style="left:1810px;top:503px;" width="12" height="12" viewBox="0 0 12 12"><path d="M6 0.5V11M1.5 6.5L6 11L10.5 6.5" stroke="#7a7d8a" stroke-width="1.2" fill="none"/></svg>
<div class="t" style="left:261px;top:535.0px;font-size:14px;line-height:18px;color:#1f1f24;font-weight:normal;">3</div>
<div class="t" style="left:307px;top:535.0px;font-size:14px;line-height:18px;color:#1f1f24;font-weight:normal;">24th Oct, 2025</div>
<div class="t" style="left:536px;top:535.0px;font-size:14px;line-height:18px;color:#1f1f24;font-weight:normal;">PVC - 103</div>
<div class="t" style="left:699px;top:535.0px;font-size:14px;line-height:18px;color:#1f1f24;font-weight:normal;">Purchase Payment</div>
<svg class="s" style="left:1327px;top:537px;" width="10" height="13" viewBox="0 0 10 13"><path d="M1 1.3 Q2.6 0 3.2 2.5 V9.8 Q3.4 12.3 5.7 12 Q8.4 11.5 8.3 8.8 Q8 7 6.3 7.3" stroke="#111" stroke-width="1.2" fill="none"/><path d="M0.3 4.8H9.8" stroke="#111" stroke-width="1.1"/><circle cx="6.2" cy="7.9" r="0.9" fill="#111"/></svg>
<div class="t" style="left:1341px;top:535.0px;font-size:14px;line-height:18px;color:#1f1f24;font-weight:normal;">138.00</div>
<div class="r" style="left:1521px;top:533px;width:89px;height:23px;border-radius:11.5px;background:#eaf8f0"></div>
<div class="t" style="left:1536px;top:535.5px;font-size:14px;line-height:18px;color:#45c48c;font-weight:normal;">Approved</div>
<div class="r" style="left:1742px;top:532px;width:93px;height:26px;border-radius:13px;border:1.3px solid #1fb774"></div>
<div class="t" style="left:1758px;top:538.0px;font-size:12px;line-height:16px;color:#7a7d8a;font-weight:normal;">SELECT</div>
<svg class="s" style="left:1810px;top:539px;" width="12" height="12" viewBox="0 0 12 12"><path d="M6 0.5V11M1.5 6.5L6 11L10.5 6.5" stroke="#7a7d8a" stroke-width="1.2" fill="none"/></svg>
<div class="t" style="left:261px;top:571.0px;font-size:14px;line-height:18px;color:#1f1f24;font-weight:normal;">4</div>
<div class="t" style="left:307px;top:571.0px;font-size:14px;line-height:18px;color:#1f1f24;font-weight:normal;">24th Oct, 2025</div>
<div class="t" style="left:536px;top:571.0px;font-size:14px;line-height:18px;color:#1f1f24;font-weight:normal;">JLV - 147</div>
<div class="t" style="left:699px;top:571.0px;font-size:14px;line-height:18px;color:#1f1f24;font-weight:normal;">Purchase Entry</div>
<svg class="s" style="left:1327px;top:573px;" width="10" height="13" viewBox="0 0 10 13"><path d="M1 1.3 Q2.6 0 3.2 2.5 V9.8 Q3.4 12.3 5.7 12 Q8.4 11.5 8.3 8.8 Q8 7 6.3 7.3" stroke="#111" stroke-width="1.2" fill="none"/><path d="M0.3 4.8H9.8" stroke="#111" stroke-width="1.1"/><circle cx="6.2" cy="7.9" r="0.9" fill="#111"/></svg>
<div class="t" style="left:1341px;top:571.0px;font-size:14px;line-height:18px;color:#1f1f24;font-weight:normal;">138.00</div>
<div class="r" style="left:1521px;top:569px;width:89px;height:23px;border-radius:11.5px;background:#eaf8f0"></div>
<div class="t" style="left:1536px;top:571.5px;font-size:14px;line-height:18px;color:#45c48c;font-weight:normal;">Approved</div>
<div class="r" style="left:1742px;top:568px;width:93px;height:26px;border-radius:13px;border:1.3px solid #1fb774"></div>
<div class="t" style="left:1758px;top:574.0px;font-size:12px;line-height:16px;color:#7a7d8a;font-weight:normal;">SELECT</div>
<svg class="s" style="left:1810px;top:575px;" width="12" height="12" viewBox="0 0 12 12"><path d="M6 0.5V11M1.5 6.5L6 11L10.5 6.5" stroke="#7a7d8a" stroke-width="1.2" fill="none"/></svg>
<div class="t" style="left:261px;top:607.0px;font-size:14px;line-height:18px;color:#1f1f24;font-weight:normal;">5</div>
<div class="t" style="left:307px;top:607.0px;font-size:14px;line-height:18px;color:#1f1f24;font-weight:normal;">24th Oct, 2025</div>
<div class="t" style="left:536px;top:607.0px;font-size:14px;line-height:18px;color:#1f1f24;font-weight:normal;">JLV - 146</div>
<div class="t" style="left:699px;top:607.0px;font-size:14px;line-height:18px;color:#1f1f24;font-weight:normal;">Cost of goods sold return to customer/Retailer</div>
<svg class="s" style="left:1327px;top:609px;" width="10" height="13" viewBox="0 0 10 13"><path d="M1 1.3 Q2.6 0 3.2 2.5 V9.8 Q3.4 12.3 5.7 12 Q8.4 11.5 8.3 8.8 Q8 7 6.3 7.3" stroke="#111" stroke-width="1.2" fill="none"/><path d="M0.3 4.8H9.8" stroke="#111" stroke-width="1.1"/><circle cx="6.2" cy="7.9" r="0.9" fill="#111"/></svg>
<div class="t" style="left:1341px;top:607.0px;font-size:14px;line-height:18px;color:#1f1f24;font-weight:normal;">12.00</div>
<div class="r" style="left:1521px;top:605px;width:89px;height:23px;border-radius:11.5px;background:#eaf8f0"></div>
<div class="t" style="left:1536px;top:607.5px;font-size:14px;line-height:18px;color:#45c48c;font-weight:normal;">Approved</div>
<div class="r" style="left:1742px;top:604px;width:93px;height:26px;border-radius:13px;border:1.3px solid #1fb774"></div>
<div class="t" style="left:1758px;top:610.0px;font-size:12px;line-height:16px;color:#7a7d8a;font-weight:normal;">SELECT</div>
<svg class="s" style="left:1810px;top:611px;" width="12" height="12" viewBox="0 0 12 12"><path d="M6 0.5V11M1.5 6.5L6 11L10.5 6.5" stroke="#7a7d8a" stroke-width="1.2" fill="none"/></svg>
<div class="t" style="left:261px;top:643.0px;font-size:14px;line-height:18px;color:#1f1f24;font-weight:normal;">6</div>
<div class="t" style="left:307px;top:643.0px;font-size:14px;line-height:18px;color:#1f1f24;font-weight:normal;">24th Oct, 2025</div>
<div class="t" style="left:536px;top:643.0px;font-size:14px;line-height:18px;color:#1f1f24;font-weight:normal;">JLV - 145</div>
<div class="t" style="left:699px;top:643.0px;font-size:14px;line-height:18px;color:#1f1f24;font-weight:normal;">Sales Return Entry Payment</div>
<svg class="s" style="left:1327px;top:645px;" width="10" height="13" viewBox="0 0 10 13"><path d="M1 1.3 Q2.6 0 3.2 2.5 V9.8 Q3.4 12.3 5.7 12 Q8.4 11.5 8.3 8.8 Q8 7 6.3 7.3" stroke="#111" stroke-width="1.2" fill="none"/><path d="M0.3 4.8H9.8" stroke="#111" stroke-width="1.1"/><circle cx="6.2" cy="7.9" r="0.9" fill="#111"/></svg>
<div class="t" style="left:1341px;top:643.0px;font-size:14px;line-height:18px;color:#1f1f24;font-weight:normal;">23.00</div>
<div class="r" style="left:1521px;top:641px;width:89px;height:23px;border-radius:11.5px;background:#eaf8f0"></div>
<div class="t" style="left:1536px;top:643.5px;font-size:14px;line-height:18px;color:#45c48c;font-weight:normal;">Approved</div>
<div class="r" style="left:1742px;top:640px;width:93px;height:26px;border-radius:13px;border:1.3px solid #1fb774"></div>
<div class="t" style="left:1758px;top:646.0px;font-size:12px;line-height:16px;color:#7a7d8a;font-weight:normal;">SELECT</div>
<svg class="s" style="left:1810px;top:647px;" width="12" height="12" viewBox="0 0 12 12"><path d="M6 0.5V11M1.5 6.5L6 11L10.5 6.5" stroke="#7a7d8a" stroke-width="1.2" fill="none"/></svg>
<div class="t" style="left:261px;top:679.0px;font-size:14px;line-height:18px;color:#1f1f24;font-weight:normal;">7</div>
<div class="t" style="left:307px;top:679.0px;font-size:14px;line-height:18px;color:#1f1f24;font-weight:normal;">24th Oct, 2025</div>
<div class="t" style="left:536px;top:679.0px;font-size:14px;line-height:18px;color:#1f1f24;font-weight:normal;">RVC - 105</div>
<div class="t" style="left:699px;top:679.0px;font-size:14px;line-height:18px;color:#1f1f24;font-weight:normal;">Sales Entry Payment</div>
<svg class="s" style="left:1327px;top:681px;" width="10" height="13" viewBox="0 0 10 13"><path d="M1 1.3 Q2.6 0 3.2 2.5 V9.8 Q3.4 12.3 5.7 12 Q8.4 11.5 8.3 8.8 Q8 7 6.3 7.3" stroke="#111" stroke-width="1.2" fill="none"/><path d="M0.3 4.8H9.8" stroke="#111" stroke-width="1.1"/><circle cx="6.2" cy="7.9" r="0.9" fill="#111"/></svg>
<div class="t" style="left:1341px;top:679.0px;font-size:14px;line-height:18px;color:#1f1f24;font-weight:normal;">28,773.00</div>
<div class="r" style="left:1521px;top:677px;width:89px;height:23px;border-radius:11.5px;background:#eaf8f0"></div>
<div class="t" style="left:1536px;top:679.5px;font-size:14px;line-height:18px;color:#45c48c;font-weight:normal;">Approved</div>
<div class="r" style="left:1742px;top:676px;width:93px;height:26px;border-radius:13px;border:1.3px solid #1fb774"></div>
<div class="t" style="left:1758px;top:682.0px;font-size:12px;line-height:16px;color:#7a7d8a;font-weight:normal;">SELECT</div>
<svg class="s" style="left:1810px;top:683px;" width="12" height="12" viewBox="0 0 12 12"><path d="M6 0.5V11M1.5 6.5L6 11L10.5 6.5" stroke="#7a7d8a" stroke-width="1.2" fill="none"/></svg>
<div class="t" style="left:261px;top:715.0px;font-size:14px;line-height:18px;color:#1f1f24;font-weight:normal;">8</div>
<div class="t" style="left:307px;top:715.0px;font-size:14px;line-height:18px;color:#1f1f24;font-weight:normal;">24th Oct, 2025</div>
<div class="t" style="left:536px;top:715.0px;font-size:14px;line-height:18px;color:#1f1f24;font-weight:normal;">JLV - 143</div>
<div class="t" style="left:699px;top:715.0px;font-size:14px;line-height:18px;color:#1f1f24;font-weight:normal;">Sales Entry</div>
<svg class="s" style="left:1327px;top:717px;" width="10" height="13" viewBox="0 0 10 13"><path d="M1 1.3 Q2.6 0 3.2 2.5 V9.8 Q3.4 12.3 5.7 12 Q8.4 11.5 8.3 8.8 Q8 7 6.3 7.3" stroke="#111" stroke-width="1.2" fill="none"/><path d="M0.3 4.8H9.8" stroke="#111" stroke-width="1.1"/><circle cx="6.2" cy="7.9" r="0.9" fill="#111"/></svg>
<div class="t" style="left:1341px;top:715.0px;font-size:14px;line-height:18px;color:#1f1f24;font-weight:normal;">28,773.00</div>
<div class="r" style="left:1521px;top:713px;width:89px;height:23px;border-radius:11.5px;background:#eaf8f0"></div>
<div class="t" style="left:1536px;top:715.5px;font-size:14px;line-height:18px;color:#45c48c;font-weight:normal;">Approved</div>
<div class="r" style="left:1742px;top:712px;width:93px;height:26px;border-radius:13px;border:1.3px solid #1fb774"></div>
<div class="t" style="left:1758px;top:718.0px;font-size:12px;line-height:16px;color:#7a7d8a;font-weight:normal;">SELECT</div>
<svg class="s" style="left:1810px;top:719px;" width="12" height="12" viewBox="0 0 12 12"><path d="M6 0.5V11M1.5 6.5L6 11L10.5 6.5" stroke="#7a7d8a" stroke-width="1.2" fill="none"/></svg>
<div class="t" style="left:261px;top:751.0px;font-size:14px;line-height:18px;color:#1f1f24;font-weight:normal;">9</div>
<div class="t" style="left:307px;top:751.0px;font-size:14px;line-height:18px;color:#1f1f24;font-weight:normal;">24th Oct, 2025</div>
<div class="t" style="left:536px;top:751.0px;font-size:14px;line-height:18px;color:#1f1f24;font-weight:normal;">JLV - 144</div>
<div class="t" style="left:699px;top:751.0px;font-size:14px;line-height:18px;color:#1f1f24;font-weight:normal;">Sales Entry Purchase Cost</div>
<svg class="s" style="left:1327px;top:753px;" width="10" height="13" viewBox="0 0 10 13"><path d="M1 1.3 Q2.6 0 3.2 2.5 V9.8 Q3.4 12.3 5.7 12 Q8.4 11.5 8.3 8.8 Q8 7 6.3 7.3" stroke="#111" stroke-width="1.2" fill="none"/><path d="M0.3 4.8H9.8" stroke="#111" stroke-width="1.1"/><circle cx="6.2" cy="7.9" r="0.9" fill="#111"/></svg>
<div class="t" style="left:1341px;top:751.0px;font-size:14px;line-height:18px;color:#1f1f24;font-weight:normal;">20,612.00</div>
<div class="r" style="left:1521px;top:749px;width:89px;height:23px;border-radius:11.5px;background:#eaf8f0"></div>
<div class="t" style="left:1536px;top:751.5px;font-size:14px;line-height:18px;color:#45c48c;font-weight:normal;">Approved</div>
<div class="r" style="left:1742px;top:748px;width:93px;height:26px;border-radius:13px;border:1.3px solid #1fb774"></div>
<div class="t" style="left:1758px;top:754.0px;font-size:12px;line-height:16px;color:#7a7d8a;font-weight:normal;">SELECT</div>
<svg class="s" style="left:1810px;top:755px;" width="12" height="12" viewBox="0 0 12 12"><path d="M6 0.5V11M1.5 6.5L6 11L10.5 6.5" stroke="#7a7d8a" stroke-width="1.2" fill="none"/></svg>
<div class="t" style="left:261px;top:787.0px;font-size:14px;line-height:18px;color:#1f1f24;font-weight:normal;">10</div>
<div class="t" style="left:307px;top:787.0px;font-size:14px;line-height:18px;color:#1f1f24;font-weight:normal;">24th Oct, 2025</div>
<div class="t" style="left:536px;top:787.0px;font-size:14px;line-height:18px;color:#1f1f24;font-weight:normal;">JLV - 142</div>
<div class="t" style="left:699px;top:787.0px;font-size:14px;line-height:18px;color:#1f1f24;font-weight:normal;">Add Opening Stock Entry</div>
<svg class="s" style="left:1327px;top:789px;" width="10" height="13" viewBox="0 0 10 13"><path d="M1 1.3 Q2.6 0 3.2 2.5 V9.8 Q3.4 12.3 5.7 12 Q8.4 11.5 8.3 8.8 Q8 7 6.3 7.3" stroke="#111" stroke-width="1.2" fill="none"/><path d="M0.3 4.8H9.8" stroke="#111" stroke-width="1.1"/><circle cx="6.2" cy="7.9" r="0.9" fill="#111"/></svg>
<div class="t" style="left:1341px;top:787.0px;font-size:14px;line-height:18px;color:#1f1f24;font-weight:normal;">20,000.00</div>
<div class="r" style="left:1521px;top:785px;width:89px;height:23px;border-radius:11.5px;background:#eaf8f0"></div>
<div class="t" style="left:1536px;top:787.5px;font-size:14px;line-height:18px;color:#45c48c;font-weight:normal;">Approved</div>
<div class="r" style="left:1742px;top:784px;width:93px;height:26px;border-radius:13px;border:1.3px solid #1fb774"></div>
<div class="t" style="left:1758px;top:790.0px;font-size:12px;line-height:16px;color:#7a7d8a;font-weight:normal;">SELECT</div>
<svg class="s" style="left:1810px;top:791px;" width="12" height="12" viewBox="0 0 12 12"><path d="M6 0.5V11M1.5 6.5L6 11L10.5 6.5" stroke="#7a7d8a" stroke-width="1.2" fill="none"/></svg>
<div class="t" style="left:240px;top:843.0px;font-size:14.7px;line-height:20px;color:#8e8e96;font-weight:normal;">Showing 1 to 10 out of 26 entries</div>
<div class="r" style="left:1704px;top:835px;width:35px;height:35px;border-radius:4px;border:1px solid #dfe2e8"></div>
<svg class="s" style="left:1718px;top:847px;" width="8" height="12" viewBox="0 0 8 12"><path d="M7 1L2 6L7 11" stroke="#2b2a35" stroke-width="2.2" fill="none"/></svg>
<div class="r" style="left:1744px;top:835px;width:35px;height:35px;border-radius:4px;background:#03b56f"></div>
<div class="t" style="left:1761.5px;top:842.5px;font-size:17px;line-height:22px;color:#fff;font-weight:normal;transform:translateX(-50%)">1</div>
<div class="r" style="left:1784px;top:835px;width:35px;height:35px;border-radius:4px;border:1px solid #dfe2e8"></div>
<div class="t" style="left:1801.5px;top:842.5px;font-size:17px;line-height:22px;color:#1f1f24;font-weight:normal;transform:translateX(-50%)">2</div>
<div class="r" style="left:1824px;top:835px;width:35px;height:35px;border-radius:4px;border:1px solid #dfe2e8"></div>
<div class="t" style="left:1841.5px;top:842.5px;font-size:17px;line-height:22px;color:#1f1f24;font-weight:normal;transform:translateX(-50%)">3</div>
<div class="r" style="left:1865px;top:835px;width:35px;height:35px;border-radius:4px;border:1px solid #dfe2e8"></div>
<svg class="s" style="left:1879px;top:847px;" width="8" height="12" viewBox="0 0 8 12"><path d="M1 1L6 6L1 11" stroke="#2b2a35" stroke-width="2.2" fill="none"/></svg>
</body></html>
